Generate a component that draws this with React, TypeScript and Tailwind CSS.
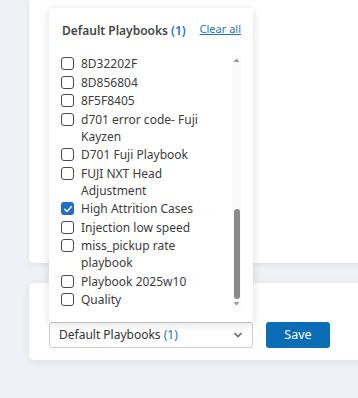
import React from "react";

type Item = { lines: string[]; checked?: boolean };

const items: Item[] = [
  { lines: ["8D32202F"] },
  { lines: ["8D856804"] },
  { lines: ["8F5F8405"] },
  { lines: ["d701 error code- Fuji", "Kayzen"] },
  { lines: ["D701 Fuji Playbook"] },
  { lines: ["FUJI NXT Head", "Adjustment"] },
  { lines: ["High Attrition Cases"], checked: true },
  { lines: ["Injection low speed"] },
  { lines: ["miss_pickup rate", "playbook"] },
  { lines: ["Playbook 2025w10"] },
  { lines: ["Quality"] },
];

function Box({ checked }: { checked?: boolean }) {
  if (checked) {
    return (
      <span className="mt-[2px] flex h-[13px] w-[13px] shrink-0 items-center justify-center rounded-[3px] bg-[#1f6fc5]">
        <svg width="10" height="10" viewBox="0 0 10 10" fill="none">
          <path d="M1.6 5.2 L4 7.5 L8.5 2.5" stroke="white" strokeWidth="1.3" strokeLinecap="round" strokeLinejoin="round" />
        </svg>
      </span>
    );
  }
  return <span className="mt-[2px] h-[13px] w-[13px] shrink-0 rounded-[3px] border border-[#4a4a4a] bg-white" />;
}

export default function App() {
  return (
    <div
      className="relative h-[398px] w-[358px] overflow-hidden bg-[#eef1f6] pl-[29px]"
      style={{ fontFamily: '"Noto Sans", "Open Sans", sans-serif' }}
    >
      <div className="-mr-[10px] h-[263px] rounded-bl-[5px] bg-white shadow-[0_1px_6px_rgba(0,0,0,0.08)]" />
      <div className="-mr-[10px] mt-[20px] h-[77px] rounded-l-[5px] bg-white pl-[20px] pt-[39px] shadow-[0_2px_8px_rgba(0,0,0,0.08)]">
        <div className="flex items-center gap-[13px]">
          <div className="relative">
            <div className="absolute bottom-full left-0 flex h-[314px] w-[204px] flex-col rounded-[4px] bg-white shadow-[0_2px_10px_rgba(0,0,0,0.14)]">
              <div className="flex h-[38px] items-end justify-between pb-[7px] pl-[13px] pr-[12px]">
                <span className="text-[12px] font-semibold leading-[17px] text-[#454545]">
                  Default Playbooks <span className="text-[#1f6fc5]">(1)</span>
                </span>
                <span className="mb-[3px] text-[11px] leading-[15px] text-[#1f6fc5] underline">Clear all</span>
              </div>
              <div className="flex pl-[12px] pr-[12px] pt-[9px]">
                <div className="flex flex-1 flex-col gap-[1.5px]">
                  {items.map((it, i) => (
                    <div key={i} className="flex gap-[7px]">
                      <Box checked={it.checked} />
                      <div className="text-[12px] leading-[17px] text-[#3c3c3c]">
                        {it.lines.map((l, j) => (
                          <div key={j}>{l}</div>
                        ))}
                      </div>
                    </div>
                  ))}
                </div>
                <div className="-mt-[1px] flex h-[256px] w-[9px] flex-col items-center bg-[#fafafa]">
                  <svg width="9" height="10" viewBox="0 0 9 10" className="mt-[1px]">
                    <path d="M1.5 7 L4.5 3.5 L7.5 7 Z" fill="#9a9a9a" />
                  </svg>
                  <div className="flex-1" />
                  <div className="h-[90px] w-[6px] rounded-[3px] bg-[#8a8a8a]" />
                  <svg width="9" height="10" viewBox="0 0 9 10" className="mb-[1px]">
                    <path d="M1.5 3 L4.5 6.5 L7.5 3 Z" fill="#9a9a9a" />
                  </svg>
                </div>
              </div>
            </div>
            <div className="flex h-[26px] w-[204px] items-center justify-between rounded-[3px] border border-[#cfcfcf] bg-white pl-[9px] pr-[9px]">
              <span className="text-[12px] text-[#333]">
                Default Playbooks <span className="text-[#1f6fc5]">(1)</span>
              </span>
              <svg width="10" height="8" viewBox="0 0 10 8" fill="none">
                <path d="M1.5 2 L5 5.5 L8.5 2" stroke="#666" strokeWidth="1.6" />
              </svg>
            </div>
          </div>
          <button className="flex h-[26px] w-[64px] items-center justify-center rounded-[3px] bg-[#0a6db5] text-[12.5px] text-white">
            Save
          </button>
        </div>
      </div>
    </div>
  );
}
